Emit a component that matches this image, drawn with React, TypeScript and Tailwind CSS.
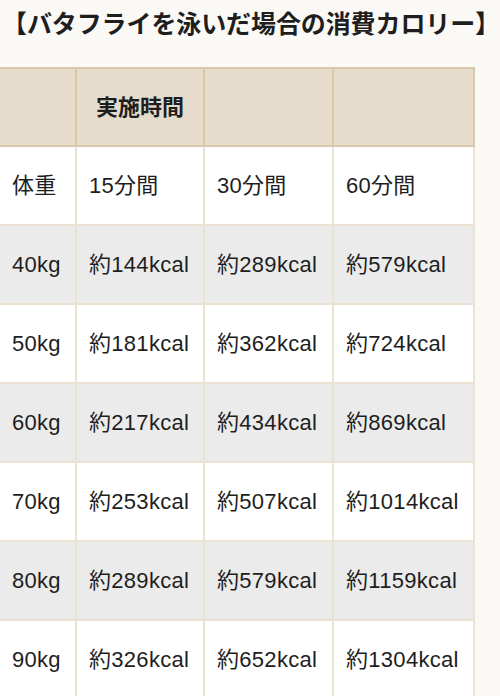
const ROWS = [
  { w: "40kg", a: "約144kcal", b: "約289kcal", c: "約579kcal" },
  { w: "50kg", a: "約181kcal", b: "約362kcal", c: "約724kcal" },
  { w: "60kg", a: "約217kcal", b: "約434kcal", c: "約869kcal" },
  { w: "70kg", a: "約253kcal", b: "約507kcal", c: "約1014kcal" },
  { w: "80kg", a: "約289kcal", b: "約579kcal", c: "約1159kcal" },
  { w: "90kg", a: "約326kcal", b: "約652kcal", c: "約1304kcal" },
];

const FONT = {
  fontFamily: '"Liberation Sans", "Noto Sans CJK JP", sans-serif',
};

const cell = "h-[79px] border-2 border-[#ece2d3] px-[12px] text-left align-middle font-normal tracking-[0.3px]";
const head = "h-[78px] border-2 border-[#d9c8ab] px-[12px] align-middle";

export default function App() {
  return (
    <div className="min-h-[696px] w-[500px] overflow-hidden bg-[#fbf9f6] text-[#1e1e1e]" style={FONT}>
      <h2 className="whitespace-nowrap pl-[2px] pt-[6px] text-[25px] font-bold leading-[36px] tracking-[-0.1px]">
        【バタフライを泳いだ場合の消費カロリー】
      </h2>
      <table className="ml-[-2px] mt-[25px] w-[475px] table-fixed border-collapse text-[22px]">
        <colgroup>
          <col className="w-[77px]" />
          <col className="w-[128px]" />
          <col className="w-[129px]" />
          <col className="w-[141px]" />
        </colgroup>
        <thead>
          <tr className="bg-[#e6dccb]">
            <th className={head}></th>
            <th className={`${head} text-center text-[22px] font-bold`}>実施時間</th>
            <th className={head}></th>
            <th className={head}></th>
          </tr>
        </thead>
        <tbody>
          <tr className="bg-white">
            <td className={cell}>体重</td>
            <td className={cell}>15分間</td>
            <td className={cell}>30分間</td>
            <td className={cell}>60分間</td>
          </tr>
          {ROWS.map((r, i) => (
            <tr key={r.w} className={i % 2 === 0 ? "bg-[#ebebeb]" : "bg-white"}>
              <td className={cell}>{r.w}</td>
              <td className={cell}>{r.a}</td>
              <td className={cell}>{r.b}</td>
              <td className={cell}>{r.c}</td>
            </tr>
          ))}
        </tbody>
      </table>
    </div>
  );
}
